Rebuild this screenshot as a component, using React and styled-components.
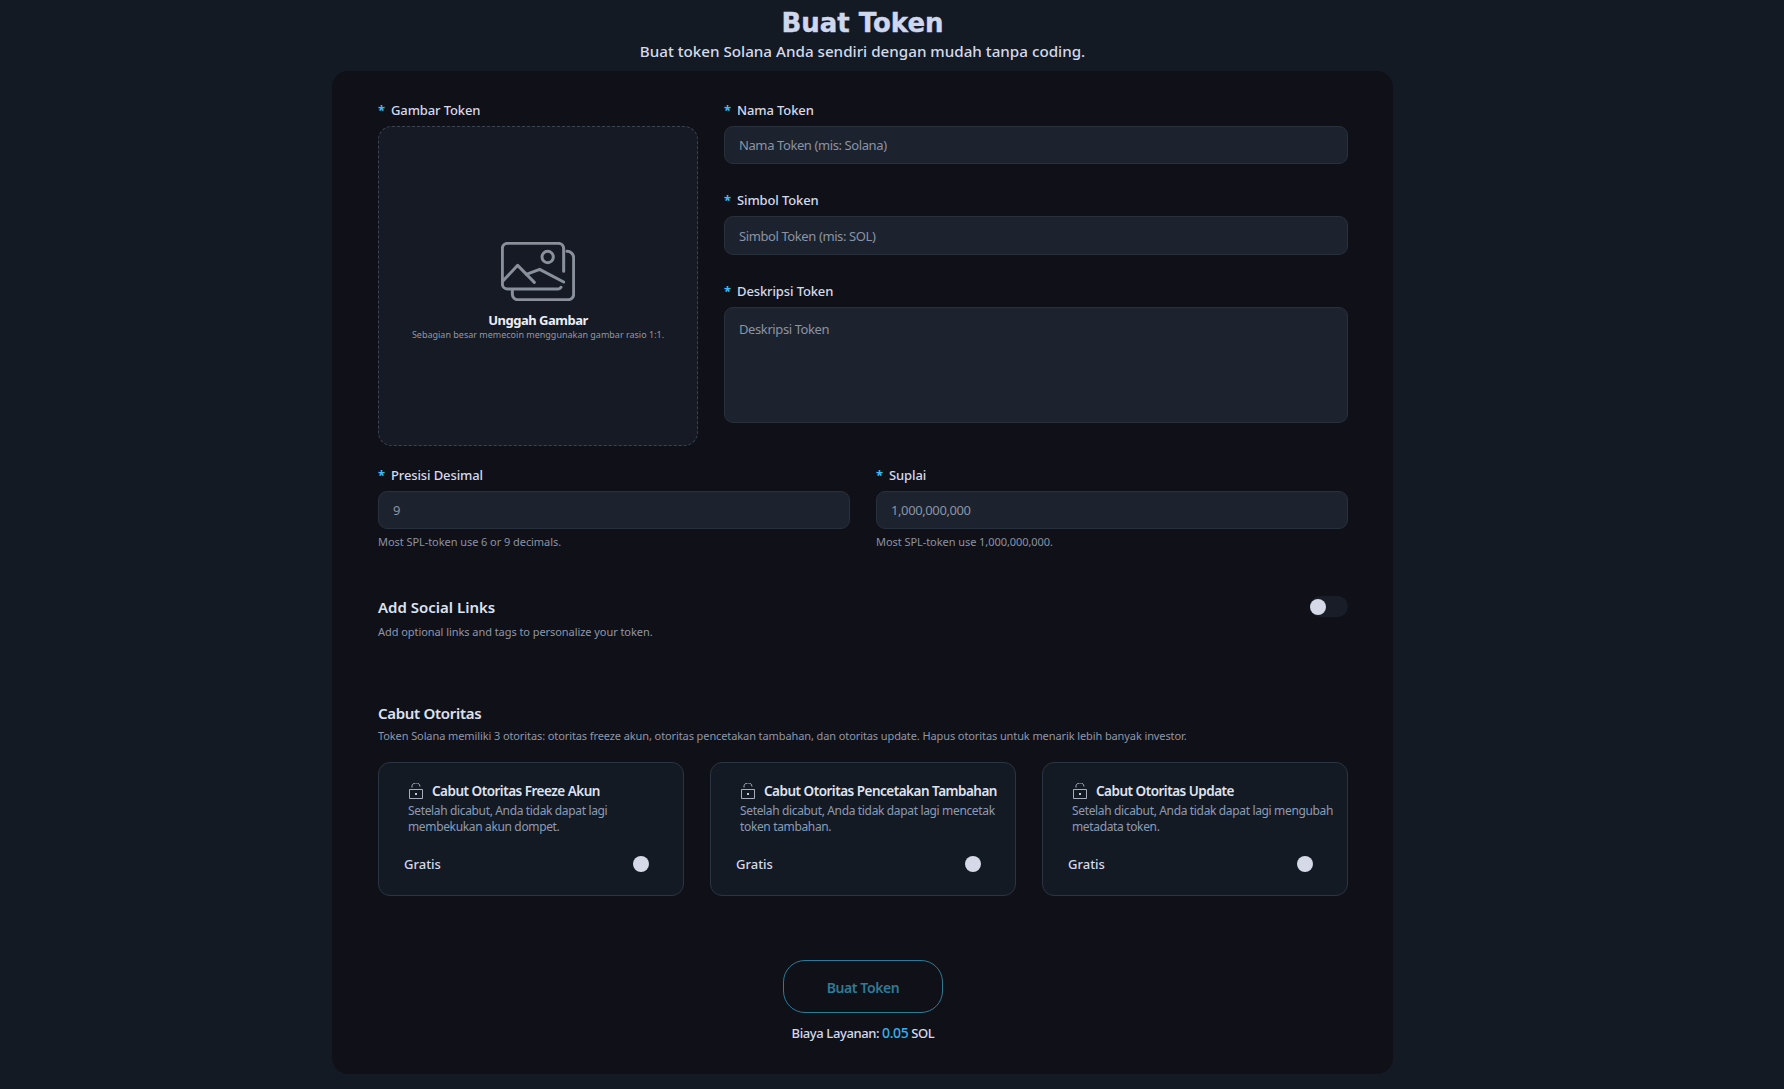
import React from "react";
import styled, { createGlobalStyle } from "styled-components";

const Global = createGlobalStyle`
  html, body { margin: 0; padding: 0; background: #141a24; }
  body { font-family: "Noto Sans", "Open Sans", sans-serif; color: #d5d9e8; }
  * { box-sizing: border-box; }
  ::placeholder { color: #8b93a5; opacity: 1; }
`;

const Page = styled.main`
  width: 1725px;
  height: 1089px;
  display: flex;
  flex-direction: column;
  align-items: center;
  overflow: hidden;
`;
const Title = styled.h1`
  margin: 7px 0 0;
  font: 700 26px/32px "DejaVu Sans", sans-serif;
  color: #ced7ee;
  -webkit-text-stroke: 0.4px #ced7ee;
`;
const Subtitle = styled.p`
  margin: 0;
  font-size: 15.2px;
  line-height: 24px;
  font-weight: 500;
  color: #d3daeb;
`;
const Panel = styled.section`
  width: 1061px;
  height: 1003px;
  margin-top: 8px;
  padding: 29px 45px 0 46px;
  border-radius: 16px;
  background: #101118;
`;
const TopRow = styled.div`
  display: grid;
  grid-template-columns: 320px 624px;
  gap: 26px;
`;
const Field = styled.div`
  display: flex;
  flex-direction: column;
  margin-bottom: ${(p) => p.$mb || 0}px;
`;
const Label = styled.label`
  display: flex;
  height: 20px;
  margin-bottom: 6px;
  align-items: center;
  font-size: 13px;
  font-weight: 500;
  letter-spacing: -0.12px;
  color: #d5d9ec;
`;
const Star = styled.span`
  width: 13px;
  color: #3dbdf0;
  font-size: 13px;
  font-weight: 700;
`;
const Upload = styled.div`
  width: 320px;
  height: 320px;
  display: flex;
  flex-direction: column;
  align-items: center;
  padding-top: 115px;
  border: 1px dashed #394351;
  border-radius: 14px;
  background: #151a24;
`;
const UploadTitle = styled.div`
  margin-top: 11px;
  font-size: 13px;
  line-height: 16px;
  font-weight: 700;
  letter-spacing: -0.5px;
  color: #eceef6;
`;
const UploadHint = styled.div`
  margin-top: 1px;
  font-size: 9px;
  line-height: 12px;
  color: #9198a8;
`;
const Input = styled.input`
  width: 100%;
  height: ${(p) => p.$h || 38}px;
  padding: 0 14px;
  border: 1px solid #28303c;
  border-radius: 9px;
  background: #1c232e;
  color: #8b93a5;
  font: 13px "Noto Sans", sans-serif;
  letter-spacing: -0.4px;
  outline: none;
`;
const Area = styled.textarea`
  display: block;
  width: 100%;
  height: 116px;
  padding: 12px 14px;
  border: 1px solid #28303c;
  border-radius: 9px;
  background: #1c232e;
  font: 13px/18px "Noto Sans", sans-serif;
  letter-spacing: -0.4px;
  outline: none;
  resize: none;
`;
const NumberRow = styled.div`
  display: grid;
  grid-template-columns: 472px 472px;
  gap: 26px;
  margin-top: 19px;
`;
const Hint = styled.div`
  margin-top: 5px;
  font-size: 11px;
  line-height: 16px;
  letter-spacing: -0.06px;
  color: #8b92a3;
`;
const SocialRow = styled.div`
  display: flex;
  align-items: flex-start;
  justify-content: space-between;
  margin-top: 46px;
`;
const SectionTitle = styled.div`
  font-size: 15px;
  line-height: 22px;
  font-weight: 600;
  letter-spacing: ${(p) => p.$ls || 0}px;
  color: #dde2f0;
`;
const SectionHint = styled.div`
  margin-top: ${(p) => p.$mt || 0}px;
  font-size: 11px;
  line-height: 16px;
  letter-spacing: ${(p) => p.$ls || 0}px;
  color: #8f96a8;
`;
const Track = styled.div`
  width: 38px;
  height: 21px;
  display: flex;
  align-items: center;
  border-radius: 11px;
  background: ${(p) => (p.$plain ? "transparent" : "#181d27")};
`;
const Knob = styled.span`
  width: 16px;
  height: 16px;
  border-radius: 50%;
  background: #d5d9e8;
`;
const Authority = styled.div`
  margin-top: 62px;
`;
const Cards = styled.div`
  display: grid;
  grid-template-columns: repeat(3, 306px);
  gap: 26px;
  margin-top: 18px;
`;
const Card = styled.article`
  height: 134px;
  padding: 18px 12px 0 25px;
  border: 1px solid #2b3442;
  border-radius: 12px;
  background: #141a24;
`;
const CardHead = styled.div`
  display: flex;
  align-items: center;
  gap: 9px;
  height: 20px;
  margin-bottom: 2px;
  padding-left: 5px;
  font-size: 13.5px;
  font-weight: 600;
  letter-spacing: -0.5px;
  white-space: nowrap;
  color: #dfe3f1;
`;
const CardText = styled.p`
  margin: 0 0 0 4px;
  font-size: 12px;
  line-height: 16px;
  letter-spacing: -0.35px;
  color: #8c9ab4;
`;
const CardFoot = styled.div`
  display: flex;
  align-items: center;
  justify-content: space-between;
  height: 21px;
  margin-top: 18px;
  font-size: 13px;
  font-weight: 500;
  color: #d5d9ec;
`;
const Price = styled.span`
  padding-top: 1px;
`;
const Footer = styled.div`
  display: flex;
  flex-direction: column;
  align-items: center;
  margin-top: 64px;
`;
const Submit = styled.button`
  width: 160px;
  height: 53px;
  padding: 2px 0 0;
  border: 1px solid #2e7a96;
  border-radius: 22px;
  background: transparent;
  color: #2f7a96;
  font: 600 14px "Noto Sans", sans-serif;
  letter-spacing: -0.4px;
`;
const Fee = styled.div`
  margin-top: 10px;
  font-size: 13px;
  line-height: 20px;
  font-weight: 500;
  letter-spacing: -0.4px;
  color: #d5d9ec;
`;
const FeeValue = styled.span`
  color: #38aeea;
  font-size: 14px;
`;

const ImageIcon = () => (
  <svg width="74" height="59" viewBox="0 0 222 177" fill="none" stroke="#8a8f9c" strokeWidth="9" strokeLinecap="round" strokeLinejoin="round">
    <path d="M188 88V20A16 16 0 0 0 172 4H20A16 16 0 0 0 4 20V125A16 16 0 0 0 20 141H170A10 10 0 0 0 180 136" />
    <path d="M5 118L50 70L100 121" />
    <path d="M76 97L116 82L188 120" />
    <circle cx="140" cy="45" r="17" />
    <path d="M198 28A20 20 0 0 1 218 47V157A16 16 0 0 1 201 173H51A16 16 0 0 1 34 157V143" />
  </svg>
);

const LockIcon = () => (
  <svg width="14" height="17" viewBox="0 0 14 17" fill="none" stroke="#b9becd" strokeWidth="0.9">
    <path d="M0.5 6.5H13.5V15.5H0.5Z" />
    <path d="M3 4.5A4 4 0 0 1 11 3.5" />
    <rect x="6" y="10" width="2" height="2" fill="#c5cad8" stroke="none" />
  </svg>
);

const authorities = [
  ["Cabut Otoritas Freeze Akun", "Setelah dicabut, Anda tidak dapat lagi membekukan akun dompet."],
  ["Cabut Otoritas Pencetakan Tambahan", "Setelah dicabut, Anda tidak dapat lagi mencetak token tambahan."],
  ["Cabut Otoritas Update", "Setelah dicabut, Anda tidak dapat lagi mengubah metadata token."],
];

const Req = ({ children }) => (
  <Label>
    <Star>*</Star>
    {children}
  </Label>
);

export default function App() {
  return (
    <Page>
      <Global />
      <Title>Buat Token</Title>
      <Subtitle>Buat token Solana Anda sendiri dengan mudah tanpa coding.</Subtitle>
      <Panel>
        <TopRow>
          <Field>
            <Req>Gambar Token</Req>
            <Upload>
              <ImageIcon />
              <UploadTitle>Unggah Gambar</UploadTitle>
              <UploadHint>Sebagian besar memecoin menggunakan gambar rasio 1:1.</UploadHint>
            </Upload>
          </Field>
          <div>
            <Field $mb={26}>
              <Req>Nama Token</Req>
              <Input placeholder="Nama Token (mis: Solana)" />
            </Field>
            <Field $mb={26}>
              <Req>Simbol Token</Req>
              <Input $h={39} placeholder="Simbol Token (mis: SOL)" />
            </Field>
            <Field>
              <Req>Deskripsi Token</Req>
              <Area placeholder="Deskripsi Token" />
            </Field>
          </div>
        </TopRow>
        <NumberRow>
          <Field>
            <Req>Presisi Desimal</Req>
            <Input defaultValue="9" />
            <Hint>Most SPL-token use 6 or 9 decimals.</Hint>
          </Field>
          <Field>
            <Req>Suplai</Req>
            <Input defaultValue="1,000,000,000" />
            <Hint>Most SPL-token use 1,000,000,000.</Hint>
          </Field>
        </NumberRow>
        <SocialRow>
          <div>
            <SectionTitle>Add Social Links</SectionTitle>
            <SectionHint $mt={6} $ls={-0.06}>Add optional links and tags to personalize your token.</SectionHint>
          </div>
          <Track>
            <Knob />
          </Track>
        </SocialRow>
        <Authority>
          <SectionTitle $ls={-0.3}>Cabut Otoritas</SectionTitle>
          <SectionHint $mt={4} $ls={-0.1}>
            Token Solana memiliki 3 otoritas: otoritas freeze akun, otoritas pencetakan tambahan, dan otoritas update. Hapus otoritas untuk menarik lebih banyak investor.
          </SectionHint>
          <Cards>
            {authorities.map(([title, text]) => (
              <Card key={title}>
                <CardHead>
                  <LockIcon />
                  {title}
                </CardHead>
                <CardText>{text}</CardText>
                <CardFoot>
                  <Price>Gratis</Price>
                  <Track $plain>
                    <Knob />
                  </Track>
                </CardFoot>
              </Card>
            ))}
          </Cards>
        </Authority>
        <Footer>
          <Submit>Buat Token</Submit>
          <Fee>
            Biaya Layanan: <FeeValue>0.05</FeeValue> SOL
          </Fee>
        </Footer>
      </Panel>
    </Page>
  );
}
